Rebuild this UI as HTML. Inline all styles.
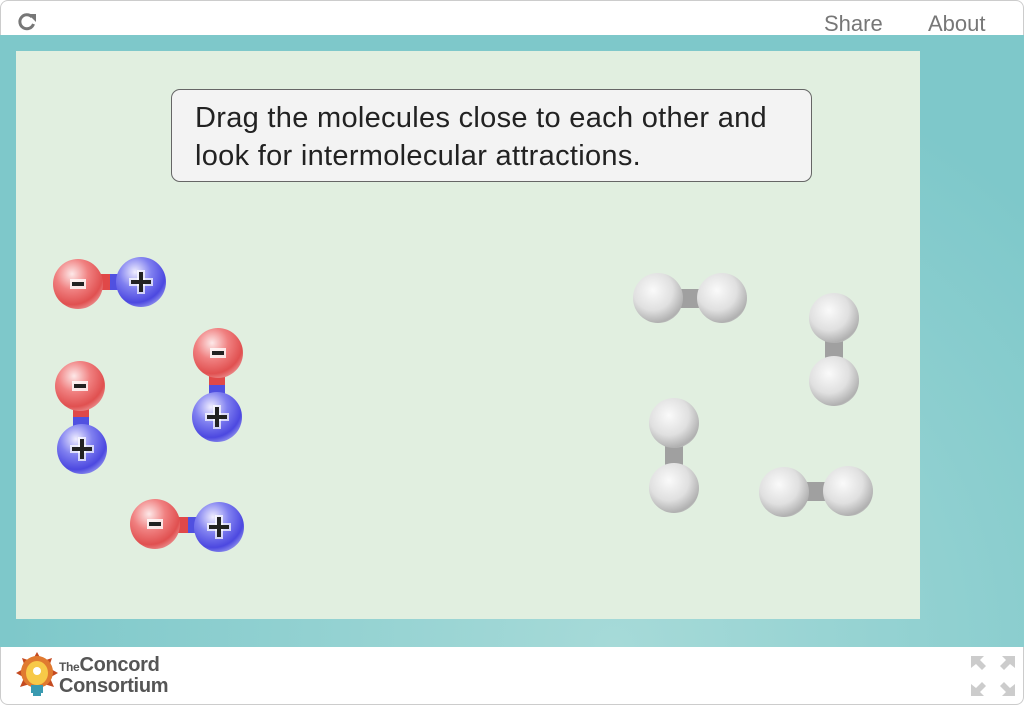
<!DOCTYPE html>
<html><head><meta charset="utf-8"><style>
body{margin:0;width:1024px;height:705px;overflow:hidden;font-family:"Liberation Sans",sans-serif;background:#fff}
.top{position:absolute;left:0;top:0;width:1022px;height:35px;border:1px solid #ccc;border-bottom:none;border-radius:8px 8px 0 0;background:#fff}
.teal{position:absolute;left:0;top:35px;width:1024px;height:612px;background:radial-gradient(ellipse at 60% 100%,#a6dad8,#7ec8ca 70%)}
.sim{position:absolute;left:16px;top:51px;width:904px;height:568px;background:#e1efe0}
.foot{position:absolute;left:0;top:647px;width:1022px;height:57px;border:1px solid #ccc;border-top:none;border-radius:0 0 8px 8px;background:#fff}
.nav{position:absolute;top:10px;font-size:22px;color:#777}
.msg{position:absolute;left:171px;top:89px;width:641px;height:93px;border:1px solid #666;border-radius:9px;background:#f3f3f3;box-sizing:border-box;padding:9px 0 0 23px;font-size:29px;line-height:38px;color:#222;letter-spacing:0.3px;white-space:nowrap}
</style></head><body>
<div class="top">
<svg style="position:absolute;left:15px;top:10px" width="22" height="22" viewBox="0 0 22 22"><path d="M16 6A7 7 0 1 0 17.5 13" fill="none" stroke="#777" stroke-width="3"/><path d="M12 3h8v8z" fill="#777"/></svg>
<span class="nav" style="left:823px">Share</span><span class="nav" style="left:927px">About</span>
</div>
<div class="teal"></div>
<div class="sim"></div>
<div class="msg">Drag the molecules close to each other and<br>look for intermolecular attractions.</div>
<svg style="position:absolute;left:0;top:0" width="1024" height="705">
<defs>
<radialGradient id="r" cx="0.38" cy="0.3" r="0.72"><stop offset="0" stop-color="#fde8e8"/><stop offset="0.45" stop-color="#f08080"/><stop offset="0.85" stop-color="#e05050"/><stop offset="1" stop-color="#e88080"/></radialGradient>
<radialGradient id="b" cx="0.38" cy="0.3" r="0.72"><stop offset="0" stop-color="#f0eeff"/><stop offset="0.45" stop-color="#8080f0"/><stop offset="0.85" stop-color="#4c48e0"/><stop offset="1" stop-color="#8080ea"/></radialGradient>
<radialGradient id="g" cx="0.4" cy="0.35" r="0.72"><stop offset="0" stop-color="#fafafa"/><stop offset="0.55" stop-color="#e0e0e0"/><stop offset="0.9" stop-color="#b0b0b0"/><stop offset="1" stop-color="#c8c8c8"/></radialGradient>
<g id="m"><rect x="-8" y="-5" width="16" height="10" fill="#fff" opacity=".8"/><rect x="-6" y="-2" width="12" height="4" fill="#222"/></g>
<g id="p"><rect x="-12" y="-4" width="24" height="8" fill="#fff" opacity=".7"/><rect x="-4" y="-12" width="8" height="24" fill="#fff" opacity=".7"/><rect x="-10" y="-2" width="20" height="4" fill="#222"/><rect x="-2" y="-10" width="4" height="20" fill="#222"/></g>
</defs>
<rect x="100" y="274" width="10" height="16" fill="#e04848"/><rect x="110" y="274" width="10" height="16" fill="#5050e0"/>
<circle cx="78" cy="284" r="25" fill="url(#r)"/><circle cx="141" cy="282" r="25" fill="url(#b)"/><use href="#m" x="78" y="284"/><use href="#p" x="141" y="282"/>
<rect x="73" y="405" width="16" height="12" fill="#e04848"/><rect x="73" y="417" width="16" height="12" fill="#5050e0"/>
<circle cx="80" cy="386" r="25" fill="url(#r)"/><circle cx="82" cy="449" r="25" fill="url(#b)"/><use href="#m" x="80" y="386"/><use href="#p" x="82" y="449"/>
<rect x="209" y="373" width="16" height="12" fill="#e04848"/><rect x="209" y="385" width="16" height="12" fill="#5050e0"/>
<circle cx="218" cy="353" r="25" fill="url(#r)"/><circle cx="217" cy="417" r="25" fill="url(#b)"/><use href="#m" x="218" y="353"/><use href="#p" x="217" y="417"/>
<rect x="176" y="517" width="12" height="16" fill="#e04848"/><rect x="188" y="517" width="12" height="16" fill="#5050e0"/>
<circle cx="155" cy="524" r="25" fill="url(#r)"/><circle cx="219" cy="527" r="25" fill="url(#b)"/><use href="#m" x="155" y="524"/><use href="#p" x="219" y="527"/>
<rect x="680" y="289" width="20" height="19" fill="#a0a0a0"/><circle cx="658" cy="298" r="25" fill="url(#g)"/><circle cx="722" cy="298" r="25" fill="url(#g)"/>
<rect x="825" y="340" width="18" height="20" fill="#a0a0a0"/><circle cx="834" cy="318" r="25" fill="url(#g)"/><circle cx="834" cy="381" r="25" fill="url(#g)"/>
<rect x="665" y="445" width="18" height="22" fill="#a0a0a0"/><circle cx="674" cy="423" r="25" fill="url(#g)"/><circle cx="674" cy="488" r="25" fill="url(#g)"/>
<rect x="806" y="482" width="20" height="19" fill="#a0a0a0"/><circle cx="784" cy="492" r="25" fill="url(#g)"/><circle cx="848" cy="491" r="25" fill="url(#g)"/>
</svg>
<div class="foot">
<svg style="position:absolute;left:13px;top:4px" width="46" height="48" viewBox="0 0 46 48">
<g fill="#c44a20"><path d="M23 1l5 9-10 0z"/><path d="M8 7l9 3-6 6z"/><path d="M38 7l-9 3 6 6z"/><path d="M2 22l9-5 0 10z"/><path d="M44 22l-9-5 0 10z"/><path d="M6 36l4-9 6 6z"/><path d="M40 36l-4-9-6 6z"/></g>
<circle cx="23" cy="21" r="16" fill="#e07a30"/>
<ellipse cx="23" cy="22" rx="11" ry="12" fill="#f7c948"/><circle cx="23" cy="20" r="4" fill="#fff"/><rect x="17" y="34" width="12" height="8" fill="#3a9ab0"/><rect x="19" y="42" width="8" height="3" fill="#3a9ab0"/></svg>
<div style="position:absolute;left:58px;top:9px;color:#555;font-size:20px;line-height:19px;font-weight:bold;letter-spacing:-0.3px"><span style="font-size:12px">The</span>Concord<br>Consortium</div>
<svg style="position:absolute;left:970px;top:9px" width="44" height="40" viewBox="0 0 44 40" fill="#ccc"><path d="M0 0h13l-4 4 6 6-4 4-6-6-5 4z"/><path d="M44 0h-13l4 4-6 6 4 4 6-6 5 4z"/><path d="M0 40h13l-4-4 6-6-4-4-6 6-5-4z"/><path d="M44 40h-13l4-4-6-6 4-4 6 6 5-4z"/></svg>
</div>
</body></html>
